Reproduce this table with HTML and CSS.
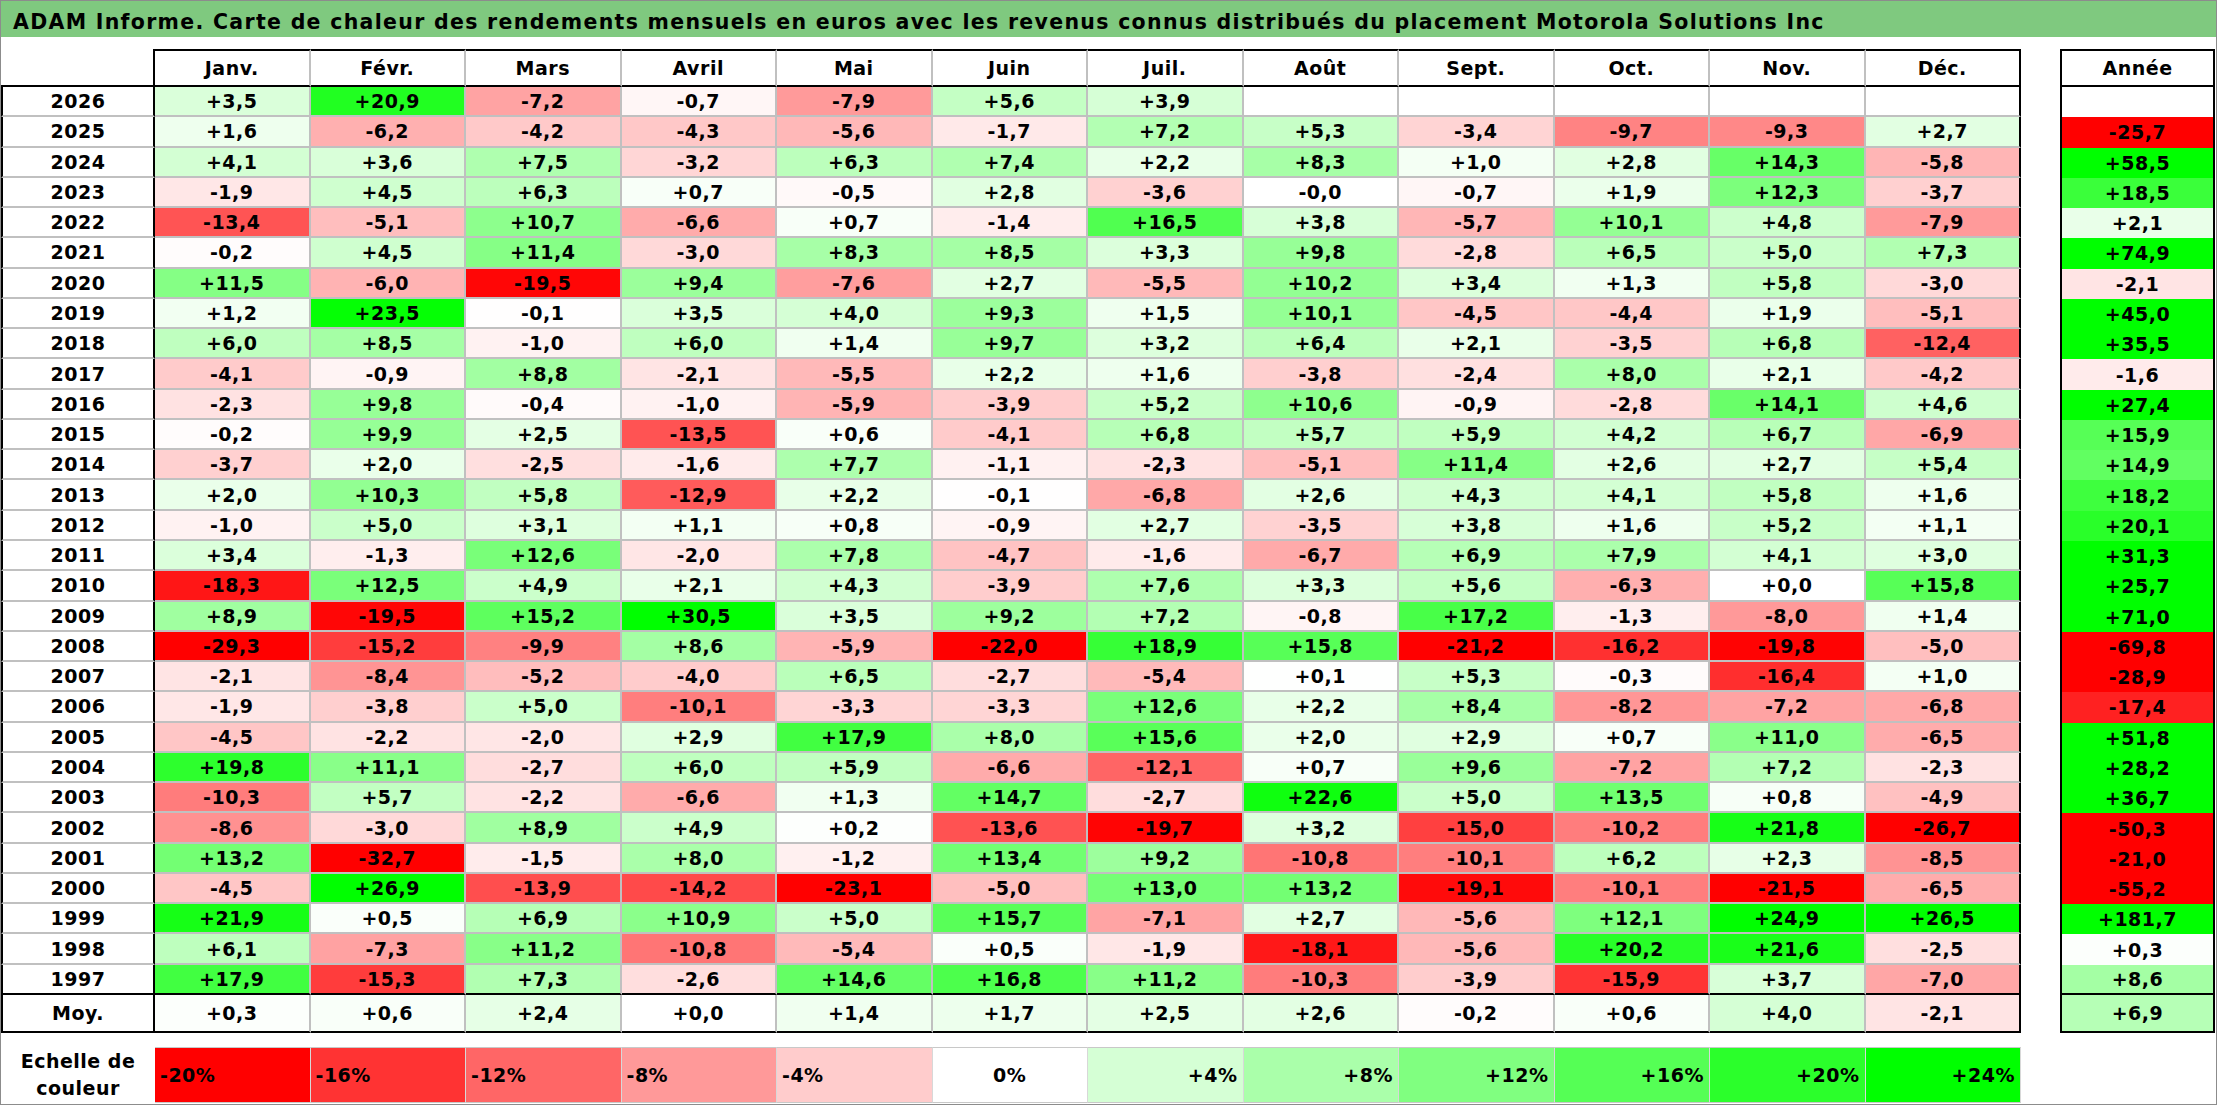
FILE: index.html
```html
<!DOCTYPE html>
<html lang="fr">
<head>
<meta charset="utf-8">
<title>ADAM Informe - Motorola Solutions Inc</title>
<link rel="stylesheet" href="styles.css">
</head>
<body>
<div class="page">
  <div class="title">ADAM Informe. Carte de chaleur des rendements mensuels en euros avec les revenus connus distribués du placement Motorola Solutions Inc</div>
  <div class="tables">
    <div class="grid" id="grid">
      <div class="corner"></div>
      <div class="mh">Janv.</div>
      <div class="mh">Févr.</div>
      <div class="mh">Mars</div>
      <div class="mh">Avril</div>
      <div class="mh">Mai</div>
      <div class="mh">Juin</div>
      <div class="mh">Juil.</div>
      <div class="mh">Août</div>
      <div class="mh">Sept.</div>
      <div class="mh">Oct.</div>
      <div class="mh">Nov.</div>
      <div class="mh mh-last">Déc.</div>
    </div>
    <div class="annee" id="annee">
      <div class="ah">Année</div>
    </div>
  </div>
  <div class="scale">
    <div class="scale-label">Echelle de<br>couleur</div>
    <div class="sc neg" style="background:rgb(255,0,0)">-20%</div>
    <div class="sc neg" style="background:rgb(255,51,51)">-16%</div>
    <div class="sc neg" style="background:rgb(255,102,102)">-12%</div>
    <div class="sc neg" style="background:rgb(255,153,153)">-8%</div>
    <div class="sc neg" style="background:rgb(255,204,204)">-4%</div>
    <div class="sc zero" style="background:rgb(255,255,255)">0%</div>
    <div class="sc pos" style="background:rgb(213,255,213)">+4%</div>
    <div class="sc pos" style="background:rgb(170,255,170)">+8%</div>
    <div class="sc pos" style="background:rgb(128,255,128)">+12%</div>
    <div class="sc pos" style="background:rgb(85,255,85)">+16%</div>
    <div class="sc pos" style="background:rgb(43,255,43)">+20%</div>
    <div class="sc pos" style="background:rgb(0,255,0)">+24%</div>
  </div>
</div>
<script src="script.js"></script>
</body>
</html>
```

FILE: styles.css
```css
* {
  box-sizing: border-box;
}

html,
body {
  margin: 0;
  padding: 0;
  background: #ffffff;
}

body {
  font-family: "DejaVu Sans", Verdana, sans-serif;
  font-weight: bold;
  color: #000000;
}

.page {
  width: 2217px;
  height: 1105px;
  border: 1px solid #8c8c8c;
  overflow: hidden;
}

.title {
  height: 36px;
  background: #7fc97f;
  font-size: 20.5px;
  letter-spacing: 1.3px;
  line-height: 30px;
  padding-top: 6px;
  padding-left: 12px;
  white-space: nowrap;
}

.tables {
  display: flex;
  align-items: flex-start;
  gap: 39px;
  margin-top: 12px;
}

.grid {
  display: grid;
  grid-template-columns: 154px repeat(12, 155.5px);
  grid-template-rows: 38px repeat(30, 30.27px) 38px;
  font-size: 19px;
  letter-spacing: 0.5px;
}

.grid > div,
.annee > div {
  display: flex;
  align-items: center;
  justify-content: center;
  white-space: nowrap;
}

.corner {
  border-right: 2px solid #000;
  border-bottom: 2px solid #000;
}

.mh {
  border-top: 2px solid #000;
  border-bottom: 2px solid #000;
  border-right: 2px solid #c0c0c0;
}

.mh-last {
  border-right-color: #000;
}

.grid .yr {
  border-left: 2px solid #000;
  border-right: 2px solid #000;
  border-bottom: 2px solid #c0c0c0;
}

.grid .cell {
  border-right: 2px solid #c0c0c0;
  border-bottom: 2px solid #c0c0c0;
}

.grid .col-last {
  border-right-color: #000;
}

.grid .row-last {
  border-bottom-color: #000;
}

.grid .row-avg {
  border-bottom: 2px solid #000;
}

.annee {
  display: grid;
  width: 155px;
  grid-template-rows: 38px repeat(30, 30.27px) 38px;
  font-size: 19px;
  letter-spacing: 0.5px;
}

.annee > div {
  border-left: 2px solid #000;
  border-right: 2px solid #000;
}

.annee .ah {
  border-top: 2px solid #000;
  border-bottom: 2px solid #000;
}

.annee .row-last,
.annee .row-avg {
  border-bottom: 2px solid #000;
}

.scale {
  display: flex;
  margin-top: 14px;
  height: 56px;
  font-size: 19px;
  letter-spacing: 0.5px;
}

.scale-label {
  width: 154px;
  flex: none;
  display: flex;
  align-items: center;
  justify-content: center;
  text-align: center;
  line-height: 27px;
}

.sc {
  width: 155.5px;
  flex: none;
  display: flex;
  align-items: center;
  border-top: 1px solid #c8c8c8;
  border-right: 1px solid #d8d8d8;
  border-bottom: 1px solid #c8c8c8;
}

.sc.neg {
  justify-content: flex-start;
  padding-left: 5px;
}

.sc.zero {
  justify-content: center;
}

.sc.pos {
  justify-content: flex-end;
  padding-right: 5px;
}
```

FILE: script.js
```js
(function () {
  var rows = [
    ["2026", "+3,5", "+20,9", "-7,2", "-0,7", "-7,9", "+5,6", "+3,9", "", "", "", "", "", ""],
    ["2025", "+1,6", "-6,2", "-4,2", "-4,3", "-5,6", "-1,7", "+7,2", "+5,3", "-3,4", "-9,7", "-9,3", "+2,7", "-25,7"],
    ["2024", "+4,1", "+3,6", "+7,5", "-3,2", "+6,3", "+7,4", "+2,2", "+8,3", "+1,0", "+2,8", "+14,3", "-5,8", "+58,5"],
    ["2023", "-1,9", "+4,5", "+6,3", "+0,7", "-0,5", "+2,8", "-3,6", "-0,0", "-0,7", "+1,9", "+12,3", "-3,7", "+18,5"],
    ["2022", "-13,4", "-5,1", "+10,7", "-6,6", "+0,7", "-1,4", "+16,5", "+3,8", "-5,7", "+10,1", "+4,8", "-7,9", "+2,1"],
    ["2021", "-0,2", "+4,5", "+11,4", "-3,0", "+8,3", "+8,5", "+3,3", "+9,8", "-2,8", "+6,5", "+5,0", "+7,3", "+74,9"],
    ["2020", "+11,5", "-6,0", "-19,5", "+9,4", "-7,6", "+2,7", "-5,5", "+10,2", "+3,4", "+1,3", "+5,8", "-3,0", "-2,1"],
    ["2019", "+1,2", "+23,5", "-0,1", "+3,5", "+4,0", "+9,3", "+1,5", "+10,1", "-4,5", "-4,4", "+1,9", "-5,1", "+45,0"],
    ["2018", "+6,0", "+8,5", "-1,0", "+6,0", "+1,4", "+9,7", "+3,2", "+6,4", "+2,1", "-3,5", "+6,8", "-12,4", "+35,5"],
    ["2017", "-4,1", "-0,9", "+8,8", "-2,1", "-5,5", "+2,2", "+1,6", "-3,8", "-2,4", "+8,0", "+2,1", "-4,2", "-1,6"],
    ["2016", "-2,3", "+9,8", "-0,4", "-1,0", "-5,9", "-3,9", "+5,2", "+10,6", "-0,9", "-2,8", "+14,1", "+4,6", "+27,4"],
    ["2015", "-0,2", "+9,9", "+2,5", "-13,5", "+0,6", "-4,1", "+6,8", "+5,7", "+5,9", "+4,2", "+6,7", "-6,9", "+15,9"],
    ["2014", "-3,7", "+2,0", "-2,5", "-1,6", "+7,7", "-1,1", "-2,3", "-5,1", "+11,4", "+2,6", "+2,7", "+5,4", "+14,9"],
    ["2013", "+2,0", "+10,3", "+5,8", "-12,9", "+2,2", "-0,1", "-6,8", "+2,6", "+4,3", "+4,1", "+5,8", "+1,6", "+18,2"],
    ["2012", "-1,0", "+5,0", "+3,1", "+1,1", "+0,8", "-0,9", "+2,7", "-3,5", "+3,8", "+1,6", "+5,2", "+1,1", "+20,1"],
    ["2011", "+3,4", "-1,3", "+12,6", "-2,0", "+7,8", "-4,7", "-1,6", "-6,7", "+6,9", "+7,9", "+4,1", "+3,0", "+31,3"],
    ["2010", "-18,3", "+12,5", "+4,9", "+2,1", "+4,3", "-3,9", "+7,6", "+3,3", "+5,6", "-6,3", "+0,0", "+15,8", "+25,7"],
    ["2009", "+8,9", "-19,5", "+15,2", "+30,5", "+3,5", "+9,2", "+7,2", "-0,8", "+17,2", "-1,3", "-8,0", "+1,4", "+71,0"],
    ["2008", "-29,3", "-15,2", "-9,9", "+8,6", "-5,9", "-22,0", "+18,9", "+15,8", "-21,2", "-16,2", "-19,8", "-5,0", "-69,8"],
    ["2007", "-2,1", "-8,4", "-5,2", "-4,0", "+6,5", "-2,7", "-5,4", "+0,1", "+5,3", "-0,3", "-16,4", "+1,0", "-28,9"],
    ["2006", "-1,9", "-3,8", "+5,0", "-10,1", "-3,3", "-3,3", "+12,6", "+2,2", "+8,4", "-8,2", "-7,2", "-6,8", "-17,4"],
    ["2005", "-4,5", "-2,2", "-2,0", "+2,9", "+17,9", "+8,0", "+15,6", "+2,0", "+2,9", "+0,7", "+11,0", "-6,5", "+51,8"],
    ["2004", "+19,8", "+11,1", "-2,7", "+6,0", "+5,9", "-6,6", "-12,1", "+0,7", "+9,6", "-7,2", "+7,2", "-2,3", "+28,2"],
    ["2003", "-10,3", "+5,7", "-2,2", "-6,6", "+1,3", "+14,7", "-2,7", "+22,6", "+5,0", "+13,5", "+0,8", "-4,9", "+36,7"],
    ["2002", "-8,6", "-3,0", "+8,9", "+4,9", "+0,2", "-13,6", "-19,7", "+3,2", "-15,0", "-10,2", "+21,8", "-26,7", "-50,3"],
    ["2001", "+13,2", "-32,7", "-1,5", "+8,0", "-1,2", "+13,4", "+9,2", "-10,8", "-10,1", "+6,2", "+2,3", "-8,5", "-21,0"],
    ["2000", "-4,5", "+26,9", "-13,9", "-14,2", "-23,1", "-5,0", "+13,0", "+13,2", "-19,1", "-10,1", "-21,5", "-6,5", "-55,2"],
    ["1999", "+21,9", "+0,5", "+6,9", "+10,9", "+5,0", "+15,7", "-7,1", "+2,7", "-5,6", "+12,1", "+24,9", "+26,5", "+181,7"],
    ["1998", "+6,1", "-7,3", "+11,2", "-10,8", "-5,4", "+0,5", "-1,9", "-18,1", "-5,6", "+20,2", "+21,6", "-2,5", "+0,3"],
    ["1997", "+17,9", "-15,3", "+7,3", "-2,6", "+14,6", "+16,8", "+11,2", "-10,3", "-3,9", "-15,9", "+3,7", "-7,0", "+8,6"],
    ["Moy.", "+0,3", "+0,6", "+2,4", "+0,0", "+1,4", "+1,7", "+2,5", "+2,6", "-0,2", "+0,6", "+4,0", "-2,1", "+6,9"]
  ];

  function colour(s) {
    if (s === "") return "#ffffff";
    var v = parseFloat(s.replace(",", "."));
    var t, c;
    if (s.charAt(0) === "-" && v < 0) {
      t = Math.min(1, -v / 20);
      c = Math.round(255 * (1 - t));
      return "rgb(255," + c + "," + c + ")";
    }
    t = Math.min(1, Math.max(0, v / 24));
    c = Math.round(255 * (1 - t));
    return "rgb(" + c + ",255," + c + ")";
  }

  var grid = document.getElementById("grid");
  var annee = document.getElementById("annee");
  var n = rows.length;

  rows.forEach(function (r, i) {
    var rowCls = i === n - 1 ? " row-avg" : (i === n - 2 ? " row-last" : "");
    var y = document.createElement("div");
    y.className = "yr" + rowCls;
    y.textContent = r[0];
    grid.appendChild(y);
    for (var m = 1; m <= 12; m++) {
      var d = document.createElement("div");
      d.className = "cell" + rowCls + (m === 12 ? " col-last" : "");
      d.textContent = r[m];
      d.style.background = colour(r[m]);
      grid.appendChild(d);
    }
    var a = document.createElement("div");
    a.className = "ac" + rowCls;
    a.textContent = r[13];
    a.style.background = colour(r[13]);
    annee.appendChild(a);
  });
})();
```
